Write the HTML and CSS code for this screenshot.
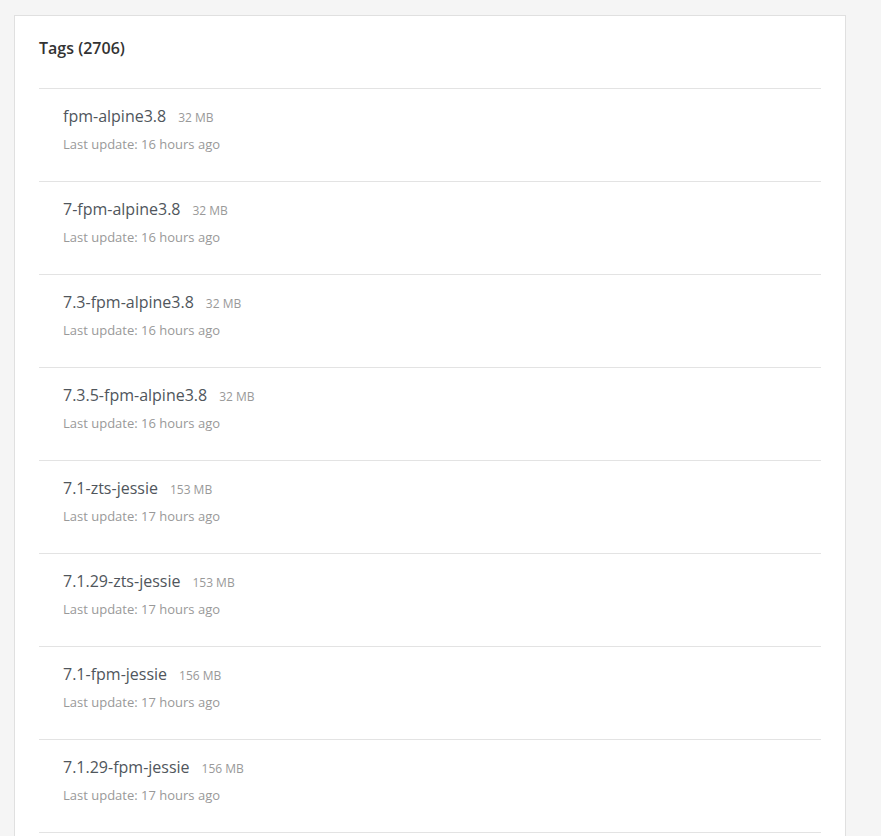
FILE: index.html
```html
<!DOCTYPE html>
<html>
<head>
<meta charset="utf-8">
<link rel="stylesheet" href="styles.css">
</head>
<body>
<div class="card">
  <h2 class="title">Tags (2706)</h2>
  <ul class="tags">
    <li class="tag"><div class="name-line"><span class="name">fpm-alpine3.8</span><span class="size">32 MB</span></div><div class="updated">Last update: 16 hours ago</div></li>
    <li class="tag"><div class="name-line"><span class="name">7-fpm-alpine3.8</span><span class="size">32 MB</span></div><div class="updated">Last update: 16 hours ago</div></li>
    <li class="tag"><div class="name-line"><span class="name">7.3-fpm-alpine3.8</span><span class="size">32 MB</span></div><div class="updated">Last update: 16 hours ago</div></li>
    <li class="tag"><div class="name-line"><span class="name">7.3.5-fpm-alpine3.8</span><span class="size">32 MB</span></div><div class="updated">Last update: 16 hours ago</div></li>
    <li class="tag"><div class="name-line"><span class="name">7.1-zts-jessie</span><span class="size">153 MB</span></div><div class="updated">Last update: 17 hours ago</div></li>
    <li class="tag"><div class="name-line"><span class="name">7.1.29-zts-jessie</span><span class="size">153 MB</span></div><div class="updated">Last update: 17 hours ago</div></li>
    <li class="tag"><div class="name-line"><span class="name">7.1-fpm-jessie</span><span class="size">156 MB</span></div><div class="updated">Last update: 17 hours ago</div></li>
    <li class="tag"><div class="name-line"><span class="name">7.1.29-fpm-jessie</span><span class="size">156 MB</span></div><div class="updated">Last update: 17 hours ago</div></li>
  </ul>
</div>
</body>
</html>
```
FILE: styles.css
```css
html, body {
  margin: 0;
  padding: 0;
  background: #f5f5f5;
  font-family: "Open Sans", "Noto Sans", sans-serif;
  height: 836px;
  overflow: hidden;
}
body {
  padding: 15px 0 0 14px;
}
.card {
  width: 832px;
  background: #fff;
  border: 1px solid #e0e0e0;
  padding: 0 24px;
  box-sizing: border-box;
  min-height: 900px;
}
.title {
  margin: 0;
  padding: 21px 0 0;
  height: 51px;
  font-size: 16px;
  font-weight: 600;
  color: #333;
  line-height: 22px;
  box-sizing: content-box;
}
.tags {
  list-style: none;
  margin: 0;
  padding: 0;
}
.tag {
  border-top: 1px solid #e3e3e3;
  padding: 16px 24px 28px;
  height: 48px;
}
.tag:last-child {
  border-bottom: 1px solid #e3e3e3;
}
.name-line {
  display: flex;
  align-items: baseline;
  gap: 12px;
  height: 22px;
  line-height: 22px;
}
.name {
  font-size: 16px;
  color: #50565c;
}
.size {
  font-size: 12px;
  color: #999;
}
.updated {
  margin-top: 8px;
  font-size: 13px;
  line-height: 18px;
  color: #999;
}
```
